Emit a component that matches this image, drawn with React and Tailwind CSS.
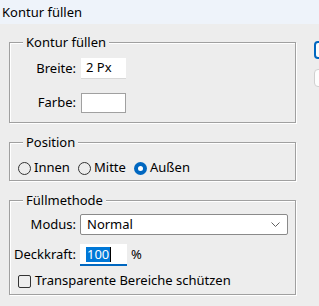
import React from "react";

function Radio({ checked }) {
  if (checked) {
    return (
      <span className="w-[13px] h-[13px] rounded-full bg-[#0067c0] flex items-center justify-center shrink-0">
        <span className="w-[5px] h-[5px] rounded-full bg-white" />
      </span>
    );
  }
  return <span className="w-[13px] h-[13px] rounded-full border border-[#333333] bg-[#ededed] shrink-0" />;
}

const groupCls =
  "border border-[#a0a0a0] shadow-[inset_1px_1px_0_#ffffff,1px_1px_0_#ffffff] px-0 mx-0 min-w-0";
const legendCls = "ml-[13px] px-[3px] leading-[16px] bg-[#ededed]";

export default function App() {
  return (
    <div className="w-[319px] h-[306px] overflow-hidden bg-[#ededed] font-['Noto_Sans',sans-serif] text-[13px] text-black">
      <div className="h-[24px] bg-[#eef3fa] pl-[2px] flex items-center leading-[16px]">Kontur füllen</div>
      <div className="flex">
        <div className="w-[287px] ml-[9px] shrink-0">
          {/* Group 1 */}
          <fieldset className={groupCls + " mt-[10px] pt-[8px] pb-[9px]"}>
            <legend className={legendCls}>Kontur füllen</legend>
            <div className="flex items-center">
              <span className="w-[66px] text-right">Breite:</span>
              <div className="ml-[5px] w-[45px] h-[21px] bg-white border-b border-[#d8d8d8] pl-[5px] flex items-center">2 Px</div>
            </div>
            <div className="flex items-center mt-[14px]">
              <span className="w-[66px] text-right">Farbe:</span>
              <div className="ml-[5px] w-[45px] h-[20px] bg-white border border-[#a0a0a0]" />
            </div>
          </fieldset>

          {/* Group 2 */}
          <fieldset className={groupCls + " mt-[11px] pt-[10px] pb-[4px]"}>
            <legend className={legendCls}>Position</legend>
            <div className="flex items-center h-[16px] pl-[8px]">
              <div className="w-[60px] flex items-center gap-[3px]">
                <Radio />
                <span>Innen</span>
              </div>
              <div className="w-[56px] flex items-center gap-[3px]">
                <Radio />
                <span>Mitte</span>
              </div>
              <div className="flex items-center gap-[3px]">
                <Radio checked />
                <span>Außen</span>
              </div>
            </div>
          </fieldset>

          {/* Group 3 */}
          <fieldset className={groupCls + " mt-[11px] pt-[6px] pb-[5px]"}>
            <legend className={legendCls}>Füllmethode</legend>
            <div className="flex items-center">
              <span className="w-[66px] text-right">Modus:</span>
              <div className="ml-[4px] w-[208px] h-[21px] bg-white border border-[#8a8a8a] rounded-[2px] flex items-center justify-between pl-[6px] pr-[6px]">
                <span>Normal</span>
                <svg width="9" height="6" viewBox="0 0 9 6" className="mr-[1px]">
                  <path d="M0.5 0.5 L4.5 4.5 L8.5 0.5" fill="none" stroke="#606060" strokeWidth="1" />
                </svg>
              </div>
            </div>
            <div className="flex items-center mt-[9px]">
              <span className="w-[66px] text-right">Deckkraft:</span>
              <div className="ml-[4px] w-[47px] h-[22px] bg-white border-b-2 border-[#0067c0] flex items-center pl-[6px]">
                <span className="bg-[#0078d7] text-white leading-[15px] px-[1px]">100</span>
                <span className="w-[1px] h-[15px] bg-black" />
              </div>
              <span className="ml-[4px]">%</span>
            </div>
            <div className="flex items-center h-[16px] mt-[7px] pl-[8px] gap-[4px]">
              <span className="w-[13px] h-[13px] border border-[#333333] rounded-[2px] bg-[#ededed] shrink-0" />
              <span>Transparente Bereiche schützen</span>
            </div>
          </fieldset>
        </div>
        <div className="ml-[18px] flex flex-col shrink-0">
          <div className="mt-[17px] w-[80px] h-[18px] border-2 border-[#0067c0] rounded-[4px] bg-[#fdfdfd]" />
          <div className="mt-[10px] w-[80px] h-[18px] border border-[#d0d0d0] rounded-[4px] bg-[#fdfdfd]" />
        </div>
      </div>
    </div>
  );
}
